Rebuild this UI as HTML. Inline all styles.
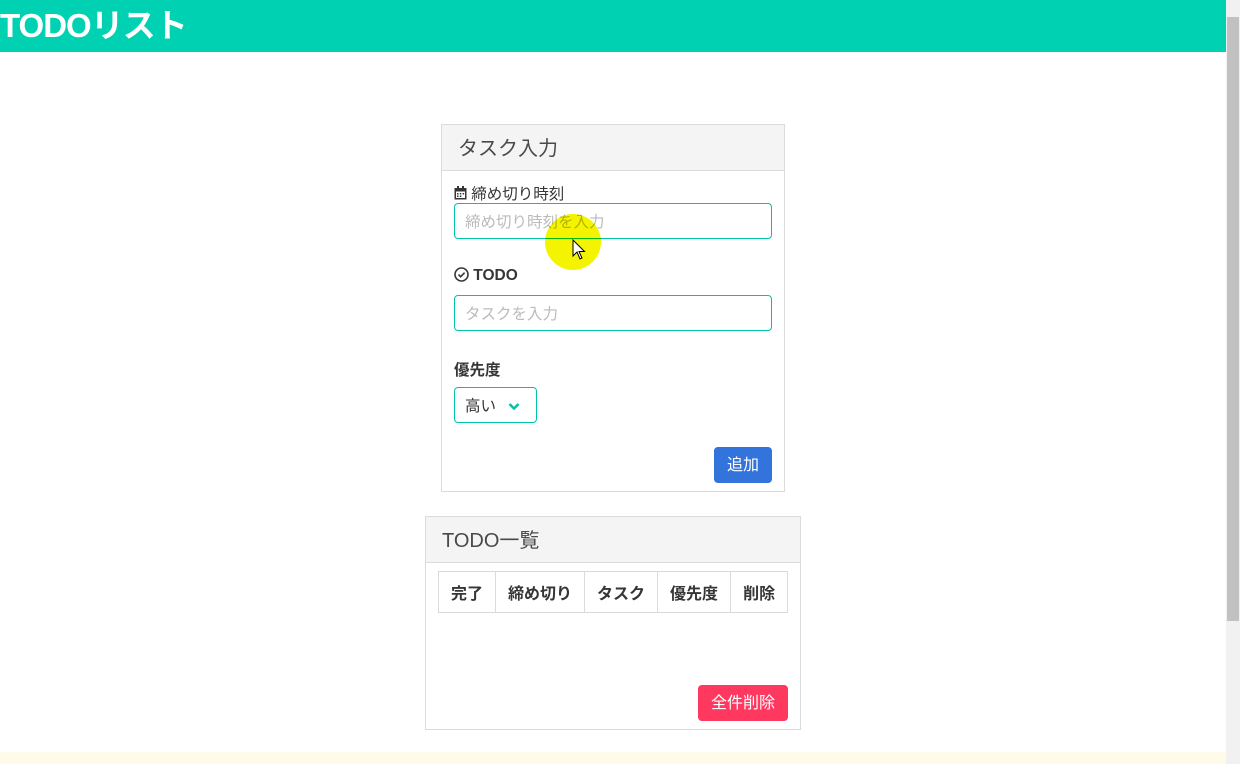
<!DOCTYPE html>
<html><head><meta charset="utf-8"><style>
*{box-sizing:border-box}
body{margin:0;width:1240px;height:764px;overflow:hidden;background:#fff;font-family:"Liberation Sans","Noto Sans CJK JP",sans-serif;color:#363636;position:relative}
.hdr{position:absolute;left:0;top:0;width:1226px;height:52px;background:#00d1b2;color:#fff;font-size:33px;font-weight:bold;line-height:52px;padding-left:0;letter-spacing:-1px}
.sb{position:absolute;right:0;top:0;width:14px;height:764px;background:#f1f1f1}
.thumb{position:absolute;right:1px;top:17px;width:12px;height:604px;background:#c1c1c1}
.card{position:absolute;border:1px solid #dbdbdb;background:#fff}
.ch{background:#f4f4f4;border-bottom:1px solid #dbdbdb;height:46px;line-height:48px;font-size:20px;padding-left:16px;color:#4a4a4a}
.lbl{position:absolute;left:12px;font-size:15.5px}
.inp{position:absolute;left:12px;width:318px;height:36px;border:1px solid #00c4a7;border-radius:4px;font-size:15.5px;color:#bbb;line-height:37px;padding-left:10px}
.btn{position:absolute;color:#fff;border-radius:4px;font-size:16px;text-align:center}
table{border-collapse:collapse;position:absolute;left:12px;top:54px}
td{border:1px solid #dbdbdb;height:41px;font-weight:bold;font-size:16px;text-align:center;padding:0 12px}
</style></head><body>
<div class="hdr">TODOリスト</div>
<div class="card" style="left:441px;top:124px;width:344px;height:368px">
 <div class="ch">タスク入力</div>
 <div class="lbl" style="top:57px"><svg width="13" height="14" viewBox="0 0 13 14" style="vertical-align:-1px"><rect x="0.5" y="2" width="12" height="11.5" fill="#363636"/><rect x="2" y="5.5" width="9" height="6.5" fill="#fff"/><rect x="3" y="0" width="2" height="3" fill="#363636"/><rect x="8" y="0" width="2" height="3" fill="#363636"/><g fill="#363636"><rect x="3" y="7" width="1.5" height="1.5"/><rect x="5.8" y="7" width="1.5" height="1.5"/><rect x="8.6" y="7" width="1.5" height="1.5"/><rect x="3" y="9.5" width="1.5" height="1.5"/><rect x="5.8" y="9.5" width="1.5" height="1.5"/></g></svg> 締め切り時刻</div>
 <div class="inp" style="top:78px">締め切り時刻を入力</div>
 <div class="lbl" style="top:142px;font-weight:bold"><svg width="15" height="15" viewBox="0 0 15 15" style="vertical-align:-2px"><circle cx="7.5" cy="7.5" r="6.5" fill="none" stroke="#363636" stroke-width="1.6"/><path d="M4.5 7.6l2.1 2.1 4-4" fill="none" stroke="#363636" stroke-width="1.6"/></svg> TODO</div>
 <div class="inp" style="top:170px">タスクを入力</div>
 <div class="lbl" style="top:233px;font-weight:bold">優先度</div>
 <div class="inp" style="top:262px;width:83px;color:#363636">高い <svg width="12" height="9" viewBox="0 0 12 9" style="margin-left:8px"><path d="M1.5 2l4.5 4.5L10.5 2" fill="none" stroke="#00c4a7" stroke-width="2.5"/></svg></div>
 <div class="btn" style="left:272px;top:322px;width:58px;height:36px;line-height:37px;background:#3273dc">追加</div>
</div>
<div style="position:absolute;left:545px;top:214px;width:56px;height:56px;border-radius:50%;background:#f4f400;mix-blend-mode:multiply"></div>
<svg style="position:absolute;left:572px;top:239px" width="14" height="22" viewBox="0 0 14 22"><path d="M1 1v16l4-4 3 7 2-1-3-6.5h5.5z" fill="#fff" stroke="#000" stroke-width="1"/></svg>
<div class="card" style="left:425px;top:516px;width:376px;height:214px">
 <div class="ch" style="font-weight:normal">TODO一覧</div>
 <table><tr><td>完了</td><td>締め切り</td><td>タスク</td><td>優先度</td><td>削除</td></tr></table>
 <div class="btn" style="left:272px;top:168px;width:90px;height:36px;line-height:37px;background:#ff3860">全件削除</div>
</div>
<div style="position:absolute;left:0;top:752px;width:1226px;height:12px;background:#fffbea"></div>
<div class="sb"><div class="thumb"></div></div>
</body></html>
